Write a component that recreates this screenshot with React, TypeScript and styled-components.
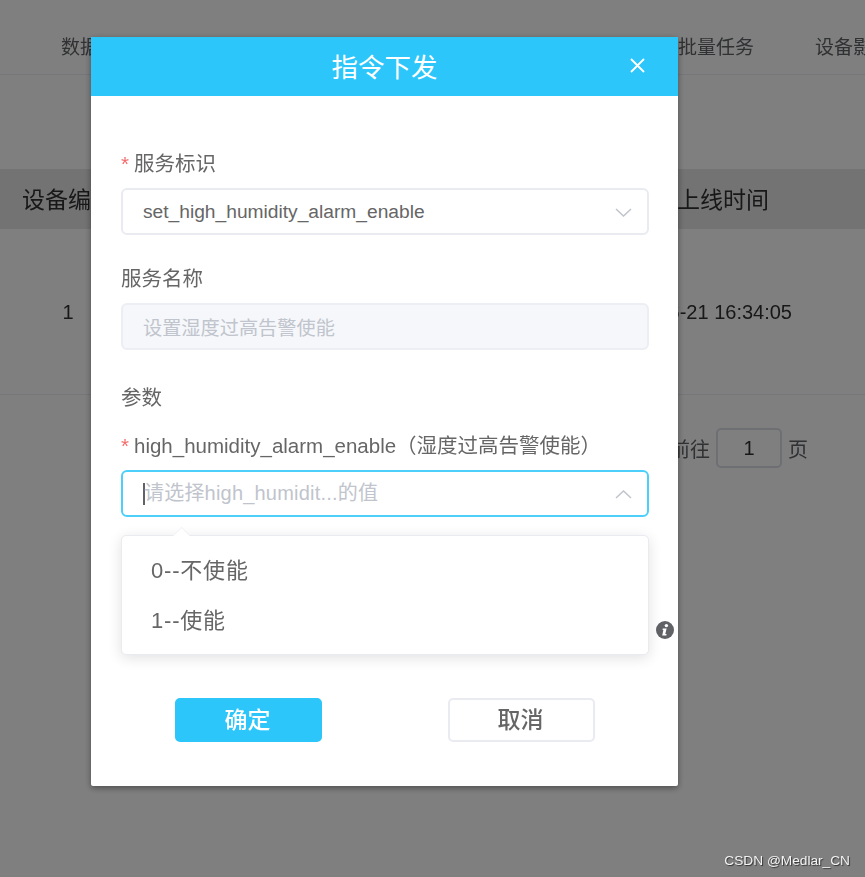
import React from "react";
import styled, { createGlobalStyle } from "styled-components";

const Global = createGlobalStyle`
  html, body { margin: 0; padding: 0; background: #fff; }
  body { font-family: "Liberation Sans", "Noto Sans CJK SC", sans-serif; overflow: hidden; }
  * { box-sizing: border-box; }
`;

const Page = styled.div`
  position: relative;
  width: 865px;
  height: 877px;
  overflow: hidden;
  filter: blur(0.35px);
  color: #303133;
`;

const Tabs = styled.nav`
  display: flex;
  height: 75px;
  padding: 16px 0 0 0;
  align-items: center;
  gap: 61px;
  border-bottom: 1px solid #ebeef5;
  font-size: 19px;
  color: #606266;
  white-space: nowrap;
`;

const Tab = styled.span<{ $offset?: number }>`
  flex: none;
  margin-left: ${(p) => p.$offset ?? 0}px;
`;

const Spacing = styled.div`
  height: 94px;
`;

const TableHead = styled.div`
  display: flex;
  align-items: center;
  height: 60px;
  padding-bottom: 3px;
  background: #e6e6e6;
  font-size: 23px;
  color: #303133;
`;

const FirstCell = styled.div`
  flex: none;
  width: 136px;
  text-align: center;
`;

const LastHead = styled.div`
  margin-left: auto;
  margin-right: 96px;
`;

const TableRow = styled.div`
  display: flex;
  align-items: center;
  height: 166px;
  border-bottom: 1px solid #ebeef5;
  font-size: 20px;
  color: #303133;
  padding-top: 2px;
`;

const LastCell = styled.div`
  margin-left: auto;
  margin-right: 73px;
`;

const Pager = styled.div`
  display: flex;
  align-items: center;
  justify-content: flex-end;
  gap: 6px;
  padding: 33px 57px 0 0;
  font-size: 20px;
  color: #606266;
`;

const PagerBox = styled.div`
  width: 66px;
  height: 40px;
  border: 2px solid #dcdfe6;
  border-radius: 5px;
  color: #303133;
  display: flex;
  align-items: center;
  justify-content: center;
`;

const Overlay = styled.div`
  position: absolute;
  inset: 0;
  background: rgba(0, 0, 0, 0.5);
  padding: 37px 0 0 91px;
`;

const Dialog = styled.section`
  width: 587px;
  height: 749px;
  background: #fff;
  border-radius: 2px;
  box-shadow: 0 2px 6px rgba(0, 0, 0, 0.4);
  display: flex;
  flex-direction: column;
`;

const DialogHeader = styled.header`
  position: relative;
  flex: none;
  height: 59px;
  padding-bottom: 3px;
  background: #2cc6fa;
  color: #fff;
  font-size: 26.5px;
  display: flex;
  align-items: center;
  justify-content: center;
`;

const CloseIcon = styled.svg`
  position: absolute;
  right: 33px;
  top: 21px;
  width: 15px;
  height: 15px;
`;

const Body = styled.div`
  position: relative;
  display: flex;
  flex-direction: column;
  padding: 55px 29px 0 30px;
`;

const Label = styled.label<{ $gap: number }>`
  display: block;
  height: 24px;
  line-height: 26px;
  margin-top: ${(p) => p.$gap}px;
  font-size: 20.5px;
  color: #666;
  white-space: nowrap;
`;

const Star = styled.span`
  color: #f56c6c;
  margin-right: 5px;
`;

const Field = styled.div<{ $focus?: boolean; $disabled?: boolean }>`
  position: relative;
  margin-top: 13px;
  height: 47px;
  padding: 0 20px;
  display: flex;
  align-items: center;
  font-size: 19.2px;
  border: 2px solid ${(p) => (p.$focus ? "#4dcffb" : p.$disabled ? "#eceef3" : "#e9ebf1")};
  border-radius: 6px;
  background: ${(p) => (p.$disabled ? "#f5f7fa" : "#fff")};
  color: ${(p) => (p.$disabled ? "#c0c4cc" : "#666")};
  white-space: nowrap;
`;

const Placeholder = styled.span`
  color: #c0c4cc;
  font-size: 20px;
  letter-spacing: 0.2px;
  padding-bottom: 4px;
`;

const Caret = styled.span`
  display: inline-block;
  width: 2px;
  height: 22px;
  margin-right: -1px;
  background: #606266;
`;

const Chevron = styled.svg`
  position: absolute;
  right: 15px;
  top: 50%;
  margin-top: -4px;
  width: 17px;
  height: 9px;
`;

const InfoRow = styled.div`
  display: flex;
  justify-content: flex-end;
  margin: 104px -25px 0 0;
`;

const Actions = styled.div`
  display: flex;
  justify-content: space-between;
  padding: 59px 54px 0 54px;
`;

const Button = styled.button<{ $primary?: boolean }>`
  width: 147px;
  height: 44px;
  border-radius: 5px;
  font: 500 23px "Liberation Sans", "Noto Sans CJK SC", sans-serif;
  border: 2px solid ${(p) => (p.$primary ? "#2cc6fa" : "#e9ebf1")};
  background: ${(p) => (p.$primary ? "#2cc6fa" : "#fff")};
  color: ${(p) => (p.$primary ? "#fff" : "#666")};
  padding: 0 2px 4px 0;
`;

const Popper = styled.div`
  position: absolute;
  left: 30px;
  right: 29px;
  top: 439px;
  height: 120px;
  padding: 10px 0 9px;
  background: #fff;
  border: 1px solid #e9ebf1;
  border-radius: 5px;
  box-shadow: 0 3px 14px rgba(0, 0, 0, 0.12);
  &::before {
    content: "";
    position: absolute;
    left: 52px;
    top: -8px;
    width: 14px;
    height: 14px;
    background: #fff;
    transform: rotate(45deg) scale(0.8);
    border-top: 1px solid #eef0f4;
    border-left: 1px solid #eef0f4;
  }
`;

const Option = styled.div`
  height: 50px;
  line-height: 50px;
  padding-left: 29px;
  font-size: 22px;
  letter-spacing: 0.8px;
  color: #666;
`;

const Watermark = styled.div`
  position: absolute;
  right: 15px;
  bottom: 9px;
  font-size: 13.7px;
  color: #f2f2f2;
  text-shadow: 1px 1px 1px rgba(0, 0, 0, 0.6);
`;

export default function App() {
  return (
    <Page>
      <Global />
      <Tabs>
        <Tab $offset={-37}>概览</Tab>
        <Tab $offset={-1}>数据解析</Tab>
        <Tab>事件管理</Tab>
        <Tab>指令下发</Tab>
        <Tab $offset={107}>日志</Tab>
        <Tab>批量任务</Tab>
        <Tab>设备影子</Tab>
      </Tabs>
      <Spacing />
      <TableHead>
        <FirstCell>设备编号</FirstCell>
        <LastHead>上线时间</LastHead>
      </TableHead>
      <TableRow>
        <FirstCell>1</FirstCell>
        <LastCell>2022-06-21 16:34:05</LastCell>
      </TableRow>
      <Pager>
        <span>前往</span>
        <PagerBox>1</PagerBox>
        <span>页</span>
      </Pager>

      <Overlay>
        <Dialog>
          <DialogHeader>
            指令下发
            <CloseIcon viewBox="0 0 15 15" fill="none" stroke="#fff" strokeWidth="1.8">
              <path d="M1 1 14 14M14 1 1 14" />
            </CloseIcon>
          </DialogHeader>
          <Body>
            <Label $gap={0}>
              <Star>*</Star>服务标识
            </Label>
            <Field>
              set_high_humidity_alarm_enable
              <Chevron viewBox="0 0 17 9" fill="none" stroke="#c0c4cc" strokeWidth="1.5">
                <path d="M1 1 8.5 8 16 1" />
              </Chevron>
            </Field>
            <Label $gap={31}>服务名称</Label>
            <Field $disabled>设置湿度过高告警使能</Field>
            <Label $gap={35}>参数</Label>
            <Label $gap={24}>
              <Star>*</Star>high_humidity_alarm_enable（湿度过高告警使能）
            </Label>
            <Field $focus>
              <Caret />
              <Placeholder>请选择high_humidit...的值</Placeholder>
              <Chevron viewBox="0 0 17 9" fill="none" stroke="#c0c4cc" strokeWidth="1.5">
                <path d="M1 8 8.5 1 16 8" />
              </Chevron>
            </Field>
            <InfoRow>
              <svg width="18" height="18" viewBox="0 0 18 18">
                <circle cx="9" cy="9" r="9" fill="#606266" />
                <circle cx="10.4" cy="4.6" r="1.7" fill="#fff" />
                <path d="M6.8 7.6h3.8l-1.3 5.4h1.3l-.3 1.5H6.2l1.2-5.4H6.5z" fill="#fff" />
              </svg>
            </InfoRow>
            <Actions>
              <Button $primary>确定</Button>
              <Button>取消</Button>
            </Actions>
            <Popper>
              <Option>0--不使能</Option>
              <Option>1--使能</Option>
            </Popper>
          </Body>
        </Dialog>
      </Overlay>
      <Watermark>CSDN @Medlar_CN</Watermark>
    </Page>
  );
}
